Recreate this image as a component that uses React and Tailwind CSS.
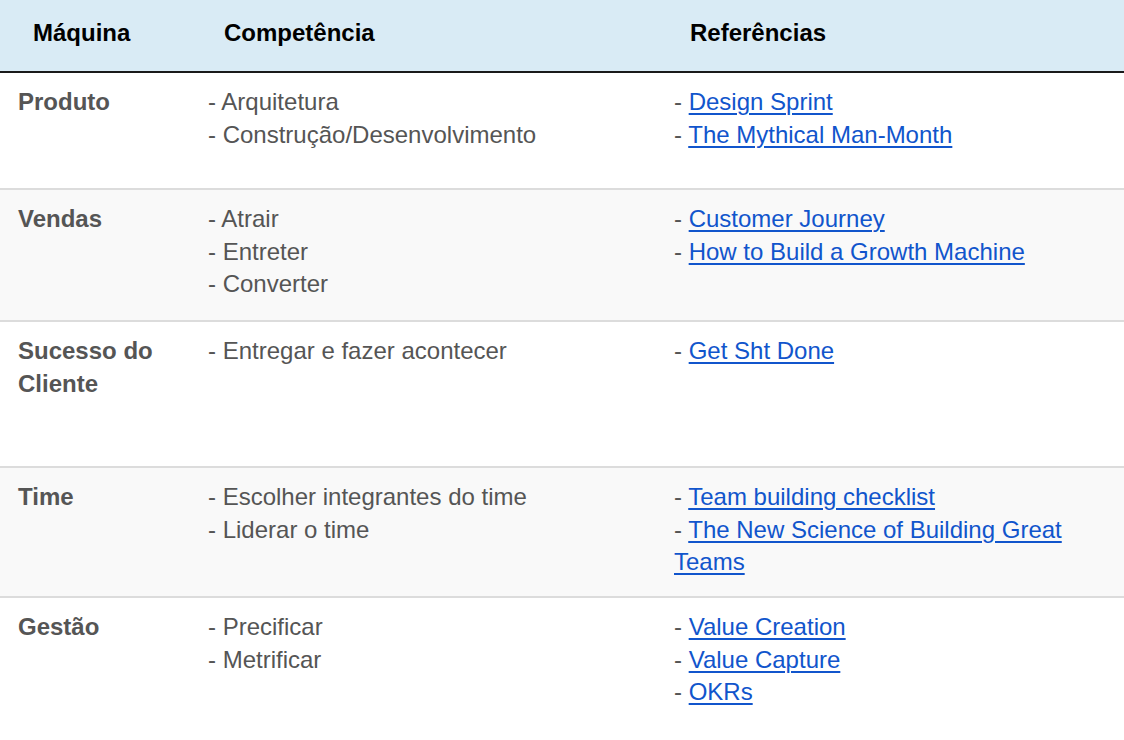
import React from 'react';

const rows = [
  {
    name: ['Produto'],
    skills: ['Arquitetura', 'Construção/Desenvolvimento'],
    refs: ['Design Sprint', 'The Mythical Man-Month'],
    h: 'h-[117px]',
    bg: 'bg-white',
  },
  {
    name: ['Vendas'],
    skills: ['Atrair', 'Entreter', 'Converter'],
    refs: ['Customer Journey', 'How to Build a Growth Machine'],
    h: 'h-[132px]',
    bg: 'bg-[#f9f9f9]',
  },
  {
    name: ['Sucesso do', 'Cliente'],
    skills: ['Entregar e fazer acontecer'],
    refs: ['Get Sht Done'],
    h: 'h-[146px]',
    bg: 'bg-white',
  },
  {
    name: ['Time'],
    skills: ['Escolher integrantes do time', 'Liderar o time'],
    refs: ['Team building checklist', 'The New Science of Building Great Teams'],
    h: 'h-[130px]',
    bg: 'bg-[#f9f9f9]',
  },
  {
    name: ['Gestão'],
    skills: ['Precificar', 'Metrificar'],
    refs: ['Value Creation', 'Value Capture', 'OKRs'],
    h: 'h-[143px]',
    bg: 'bg-white',
  },
];

export default function App() {
  return (
    <div className="w-[1124px] h-[740px] overflow-hidden bg-white font-['Liberation_Sans',Arial,sans-serif] text-[24px] leading-[32.5px]">
      <div className="grid grid-cols-[190px_466px_1fr] h-[73px] bg-[#d9ebf5] border-b-2 border-[#1a1a1a] items-center pb-[4px] font-bold text-black">
        <div className="pl-[33px]">Máquina</div>
        <div className="pl-[34px]">Competência</div>
        <div className="pl-[34px]">Referências</div>
      </div>
      {rows.map((r, i) => (
        <div
          key={i}
          className={`grid grid-cols-[190px_466px_1fr] pt-[13px] ${r.h} ${r.bg} ${i < rows.length - 1 ? 'border-b-2 border-[#dcdcdc]' : ''}`}
        >
          <div className="pl-[18px] font-bold text-[#555]">
            {r.name.map((n) => (
              <div key={n}>{n}</div>
            ))}
          </div>
          <div className="pl-[18px] text-[#555]">
            {r.skills.map((s) => (
              <div key={s}>- {s}</div>
            ))}
          </div>
          <div className="pl-[18px] pr-[40px] text-[#555]">
            {r.refs.map((s) => (
              <div key={s}>
                -{' '}
                <a href="#" className="text-[#1155cc] underline decoration-2 underline-offset-[3px]">
                  {s}
                </a>
              </div>
            ))}
          </div>
        </div>
      ))}
    </div>
  );
}
